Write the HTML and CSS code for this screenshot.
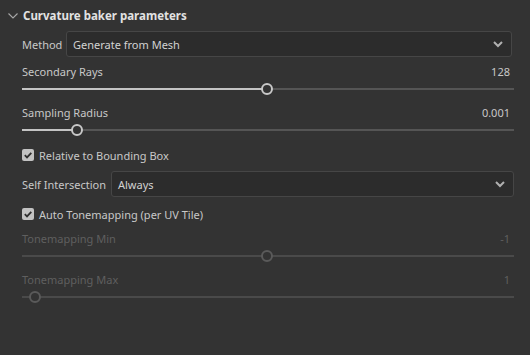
FILE: index.html
```html
<!DOCTYPE html>
<html lang="en">
<head>
  <meta charset="UTF-8">
  <meta name="viewport" content="width=device-width, initial-scale=1.0">
  <title>Curvature baker parameters</title>
  <link rel="stylesheet" href="styles.css">
</head>
<body>
  <div class="panel">
    <div class="header">
      <svg class="caret" width="10" height="6" viewBox="0 0 10 6"><path d="M0.5 0.5 L5 5 L9.5 0.5" fill="none" stroke="#a8a8a8" stroke-width="1.1"/></svg>
      <span class="title">Curvature baker parameters</span>
    </div>

    <div class="select-row">
      <label class="select-label">Method</label>
      <div class="select">
        <span>Generate from Mesh</span>
        <svg width="10" height="7" viewBox="0 0 10 7"><path d="M1 1 L5 5 L9 1" fill="none" stroke="#b0b0b0" stroke-width="2"/></svg>
      </div>
    </div>

    <div class="field">
      <div class="field-top"><span>Secondary Rays</span><span>128</span></div>
      <div class="slider"><div class="fill" style="width: 49.8%"></div><div class="thumb"></div><div class="rest"></div></div>
    </div>

    <div class="field">
      <div class="field-top"><span>Sampling Radius</span><span>0.001</span></div>
      <div class="slider"><div class="fill" style="width: 11.2%"></div><div class="thumb"></div><div class="rest"></div></div>
    </div>

    <div class="check check-first">
      <span class="box"><svg width="12" height="12" viewBox="0 0 12 12"><path d="M2.8 6.2 L5 8.4 L9.3 3.8" fill="none" stroke="#2e2e2e" stroke-width="1.8"/></svg></span>
      <span>Relative to Bounding Box</span>
    </div>

    <div class="select-row select-second">
      <label class="select-label">Self Intersection</label>
      <div class="select">
        <span>Always</span>
        <svg width="10" height="7" viewBox="0 0 10 7"><path d="M1 1 L5 5 L9 1" fill="none" stroke="#b0b0b0" stroke-width="2"/></svg>
      </div>
    </div>

    <div class="check check-second">
      <span class="box"><svg width="12" height="12" viewBox="0 0 12 12"><path d="M2.8 6.2 L5 8.4 L9.3 3.8" fill="none" stroke="#2e2e2e" stroke-width="1.8"/></svg></span>
      <span>Auto Tonemapping (per UV Tile)</span>
    </div>

    <div class="field disabled field-min">
      <div class="field-top"><span>Tonemapping Min</span><span>-1</span></div>
      <div class="slider"><div class="fill" style="width: 49.8%"></div><div class="thumb"></div><div class="rest"></div></div>
    </div>

    <div class="field disabled">
      <div class="field-top"><span>Tonemapping Max</span><span>1</span></div>
      <div class="slider"><div class="fill" style="width: 2.6%"></div><div class="thumb"></div><div class="rest"></div></div>
    </div>
  </div>
</body>
</html>
```

FILE: styles.css
```css
body {
  margin: 0;
  background-color: #333333;
  color: #c8c8c8;
  font-family: "Noto Sans", "Open Sans", sans-serif;
  font-size: 11px;
  width: 530px;
  height: 355px;
  overflow: hidden;
}

.panel {
  padding: 0 16px 0 22px;
}

.header {
  height: 31px;
  display: flex;
  align-items: center;
  margin-left: -14px;
  gap: 5px;
}

.caret {
  margin-top: 1px;
}

.title {
  font-weight: bold;
  font-size: 11.5px;
  color: #e2e2e2;
}

.select-row {
  display: flex;
  align-items: center;
  height: 26px;
}

.select-label {
  width: 44px;
  flex-shrink: 0;
}

.select-second .select-label {
  width: 89px;
}

.select-row .select {
  flex: 1;
  height: 24px;
  display: flex;
  align-items: center;
  justify-content: space-between;
  padding: 0 8px 0 6px;
  background-color: #2c2c2c;
  border: 1px solid #464646;
  border-radius: 3px;
  color: #d2d2d2;
  margin-right: 2px;
}

.select-second .select {
  margin-right: 0;
}

.select-second {
  margin-top: 8px;
}

.field {
  margin-top: 6px;
}

.field-top {
  height: 16px;
  display: flex;
  align-items: center;
  justify-content: space-between;
  padding-right: 4px;
}

.slider {
  height: 18px;
  margin-top: 1px;
  display: flex;
  align-items: center;
}

.fill {
  height: 2px;
  background-color: #c4c4c4;
  margin-right: -6px;
}

.rest {
  flex: 1;
  height: 2px;
  background-color: #555555;
  margin-left: -6px;
}

.thumb {
  width: 8px;
  height: 8px;
  border: 2px solid #c8c8c8;
  border-radius: 50%;
  background-color: #333333;
  flex-shrink: 0;
  position: relative;
  z-index: 1;
}

.check {
  height: 16px;
  display: flex;
  align-items: center;
  gap: 5px;
}

.check-first {
  margin-top: 8px;
}

.check-second {
  margin-top: 9px;
}

.box {
  width: 12px;
  height: 12px;
  border-radius: 2px;
  background-color: #c2c2c2;
  display: flex;
}

.field-min {
  margin-top: 8px;
}

.disabled {
  color: #5f5f5f;
}

.disabled .fill,
.disabled .rest {
  background-color: #4a4a4a;
}

.disabled .thumb {
  border-color: #5a5a5a;
}
```
